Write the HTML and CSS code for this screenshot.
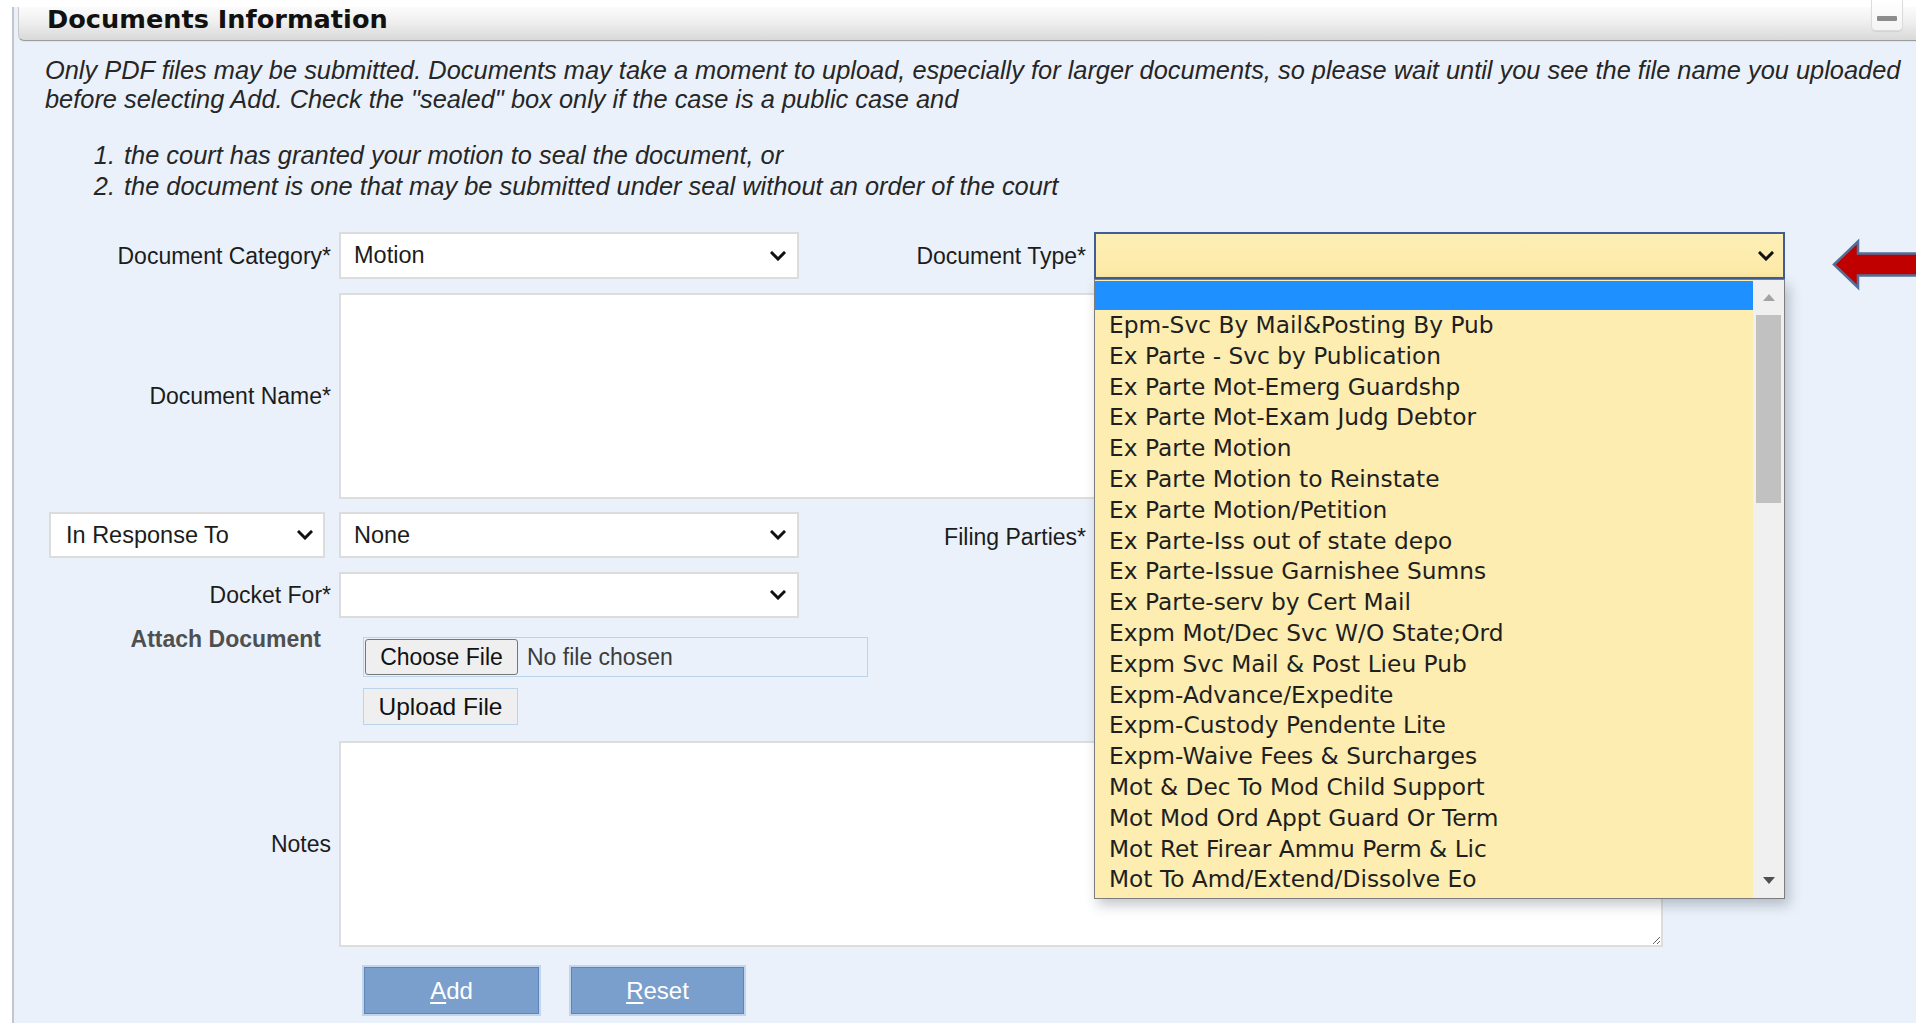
FILE: index.html
```html
<!DOCTYPE html>
<html lang="en">
<head>
<meta charset="utf-8">
<title>Documents Information</title>
<link rel="stylesheet" href="styles.css">
</head>
<body>
<section class="panel">
  <header class="panel-head">
    <h2 class="panel-title">Documents Information</h2>
    <button class="panel-min" type="button" aria-label="Collapse"><span></span></button>
  </header>

  <div class="panel-body">
    <p class="intro">Only PDF files may be submitted. Documents may take a moment to upload, especially for larger documents, so please wait until you see the file name you uploaded before selecting Add. Check the "sealed" box only if the case is a public case and</p>
    <ol class="seal-rules">
      <li>the court has granted your motion to seal the document, or</li>
      <li>the document is one that may be submitted under seal without an order of the court</li>
    </ol>

    <form class="doc-form">
      <!-- category / type -->
      <div class="row row-select">
        <label class="lbl">Document Category*</label>
        <div class="select"><span>Motion</span><svg class="chev" viewBox="0 0 16 10" width="16" height="10"><path d="M2 2l6 6 6-6"/></svg></div>
        <label class="lbl">Document Type*</label>
        <div class="type-field">
          <div class="select select-type"><span></span><svg class="chev" viewBox="0 0 16 10" width="16" height="10"><path d="M2 2l6 6 6-6"/></svg></div>

          <div class="type-list">
            <ul class="type-options">
              <li class="is-active">&nbsp;</li>
              <li>Epm-Svc By Mail&amp;Posting By Pub</li>
              <li>Ex Parte - Svc by Publication</li>
              <li>Ex Parte Mot-Emerg Guardshp</li>
              <li>Ex Parte Mot-Exam Judg Debtor</li>
              <li>Ex Parte Motion</li>
              <li>Ex Parte Motion to Reinstate</li>
              <li>Ex Parte Motion/Petition</li>
              <li>Ex Parte-Iss out of state depo</li>
              <li>Ex Parte-Issue Garnishee Sumns</li>
              <li>Ex Parte-serv by Cert Mail</li>
              <li>Expm Mot/Dec Svc W/O State;Ord</li>
              <li>Expm Svc Mail &amp; Post Lieu Pub</li>
              <li>Expm-Advance/Expedite</li>
              <li>Expm-Custody Pendente Lite</li>
              <li>Expm-Waive Fees &amp; Surcharges</li>
              <li>Mot &amp; Dec To Mod Child Support</li>
              <li>Mot Mod Ord Appt Guard Or Term</li>
              <li>Mot Ret Firear Ammu Perm &amp; Lic</li>
              <li>Mot To Amd/Extend/Dissolve Eo</li>
            </ul>
            <div class="list-scroll">
              <svg class="scroll-up" viewBox="0 0 12 8" width="12" height="8"><path d="M0 8L6 1l6 7z"/></svg>
              <div class="scroll-thumb"></div>
              <svg class="scroll-down" viewBox="0 0 12 8" width="12" height="8"><path d="M0 0h12L6 7z"/></svg>
            </div>
          </div>

          <svg class="pointer" viewBox="0 0 86 50" width="86" height="50"><path d="M2 24.5L26 1.5V13.5H86V35.5H26V47.5Z"/></svg>
        </div>
      </div>

      <!-- document name -->
      <div class="row row-text row-name">
        <label class="lbl">Document Name*</label>
        <textarea class="area"></textarea>
      </div>

      <!-- response / filing parties -->
      <div class="row row-select row-response">
        <div class="select select-response"><span>In Response To</span><svg class="chev" viewBox="0 0 16 10" width="16" height="10"><path d="M2 2l6 6 6-6"/></svg></div>
        <div class="select"><span>None</span><svg class="chev" viewBox="0 0 16 10" width="16" height="10"><path d="M2 2l6 6 6-6"/></svg></div>
        <label class="lbl lbl-parties">Filing Parties*</label>
        <div class="parties"></div>
      </div>

      <!-- docket for -->
      <div class="row row-select row-docket">
        <label class="lbl">Docket For*</label>
        <div class="select"><span></span><svg class="chev" viewBox="0 0 16 10" width="16" height="10"><path d="M2 2l6 6 6-6"/></svg></div>
      </div>

      <!-- attachment -->
      <div class="row row-attach">
        <label class="lbl lbl-attach">Attach Document</label>
        <div class="attach">
          <div class="file">
            <span class="file-btn">Choose File</span>
            <span class="file-name">No file chosen</span>
          </div>
          <button class="upload" type="button">Upload File</button>
        </div>
      </div>

      <!-- notes -->
      <div class="row row-text row-notes">
        <label class="lbl">Notes</label>
        <textarea class="area"></textarea>
      </div>

      <div class="row row-actions">
        <span></span>
        <div class="actions">
          <button class="btn" type="button"><u>A</u>dd</button>
          <button class="btn btn-reset" type="button"><u>R</u>eset</button>
        </div>
      </div>
    </form>
  </div>
</section>
</body>
</html>
```

FILE: styles.css
```css
html, body {
  margin: 0;
  height: 100%;
  overflow: hidden;
}

body {
  background: #ffffff;
  font-family: "Liberation Sans", Arial, sans-serif;
  color: #1c1c1c;
  padding-top: 7px;
  box-sizing: border-box;
}

/* ---------- panel shell ---------- */
.panel {
  margin-left: 12px;
  border-left: 2px solid #c3c7cd;
  background: #eaf1fa;
  min-height: 1016px;
}

.panel-head {
  position: relative;
  margin-left: 4px;
  height: 33px;
  border-left: 1px solid #c9c9c9;
  border-bottom: 1px solid #9c9c9c;
  border-bottom-left-radius: 6px;
  background: linear-gradient(#fbfbfb, #f1f1f1 40%, #d9d9d9);
  box-shadow: 0 1px 0 #dfe4ea;
}

.panel-title {
  margin: 0;
  padding-left: 28px;
  font-family: "DejaVu Sans", Verdana, sans-serif;
  font-weight: bold;
  font-size: 25.6px;
  line-height: 25px;
  color: #111;
}

.panel-min {
  position: absolute;
  top: -7px;
  right: 13px;
  width: 32px;
  height: 31px;
  padding: 0;
  border: 1px solid #dcdcdc;
  border-top: none;
  border-radius: 0 0 5px 5px;
  background: linear-gradient(#ffffff, #f4f4f4);
  box-shadow: 0 1px 1px rgba(0, 0, 0, .08);
}

.panel-min span {
  display: block;
  width: 20px;
  height: 5px;
  margin: 6px auto 0;
  background: #8c8c8c;
  border-radius: 1px;
}

/* ---------- intro text ---------- */
.intro {
  margin: 15px 4px 0 31px;
  font-style: italic;
  font-size: 25.4px;
  line-height: 29px;
  color: #262626;
}

.seal-rules {
  margin: 26px 0 0;
  padding-left: 108px;
  font-style: italic;
  font-size: 25.4px;
  line-height: 31px;
  color: #262626;
}

.seal-rules li { padding-left: 2px; }

/* ---------- form grid ---------- */
.doc-form {
  margin-top: 30px;
  display: flex;
  flex-direction: column;
}

.row {
  display: grid;
  grid-template-columns: 317px 460px 279px 691px;
  column-gap: 8px;
  align-items: center;
}

.row.row-name { margin-top: 14px; }
.row.row-response { margin-top: 13px; }
.row.row-docket { margin-top: 14px; }
.row.row-attach { margin-top: 8px; align-items: start; }
.row.row-notes { margin-top: 16px; }
.row.row-actions { margin-top: 20px; }

.lbl {
  justify-self: end;
  font-size: 23px;
  line-height: 26px;
  color: #1c1c1c;
  white-space: nowrap;
}

.lbl-parties { position: relative; top: 2px; }

.lbl-attach {
  padding-right: 10px;
  font-weight: bold;
  font-size: 23px;
  color: #4f4f4f;
}

/* select look-alike */
.select {
  box-sizing: border-box;
  height: 47px;
  display: flex;
  align-items: center;
  justify-content: space-between;
  padding: 0 11px 0 13px;
  background: #fff;
  border: 2px solid #dcdcdc;
  font-size: 23.5px;
  color: #1c1c1c;
}

.row-response .select,
.row-docket .select { height: 46px; }

.chev path {
  fill: none;
  stroke: #111;
  stroke-width: 3;
  stroke-linecap: square;
}

.select-response {
  width: 276px;
  justify-self: end;
  margin-right: 6px;
  padding-left: 15px;
  padding-right: 10px;
}

.type-field {
  position: relative;
}

.select-type {
  background: linear-gradient(#fdefb6, #fce9a6);
  border: 2px solid #405d97;
  padding-right: 9px;
}

/* open option list of Document Type */
.type-list {
  position: absolute;
  z-index: 5;
  top: 47px;
  left: 0;
  width: 691px;
  height: 620px;
  box-sizing: border-box;
  display: flex;
  border: 1px solid #7d7d7d;
  background: #fdedb0;
  box-shadow: 4px 6px 12px rgba(40, 50, 70, .28);
}

.type-options {
  list-style: none;
  margin: 0;
  padding: 0;
  width: 658px;
  font-family: "DejaVu Sans", Verdana, sans-serif;
  font-size: 23.3px;
  color: #1f1f1f;
}

.type-options li {
  height: 30.8px;
  line-height: 30.8px;
  padding-left: 14px;
  white-space: nowrap;
}

.type-options li.is-active {
  background: #1e90ff;
  height: 29px;
  margin-top: 1px;
}

.list-scroll {
  position: relative;
  flex: 1;
  background: #f0f0f0;
}

.scroll-up,
.scroll-down {
  position: absolute;
  left: 50%;
  margin-left: -6px;
}

.scroll-up { top: 13px; }
.scroll-up path { fill: #a3a3a3; }
.scroll-down { top: 597px; }
.scroll-down path { fill: #505050; }

.scroll-thumb {
  position: absolute;
  top: 35px;
  left: 3px;
  right: 3px;
  height: 188px;
  background: #c1c1c1;
}

.pointer {
  position: absolute;
  top: 8px;
  left: 738px;
  overflow: visible;
}

.pointer path {
  fill: #c00000;
  stroke: #4f709a;
  stroke-width: 2.5;
  stroke-linejoin: miter;
}

/* text areas */
.area {
  grid-column: 2 / span 3;
  box-sizing: border-box;
  width: 1324px;
  height: 206px;
  margin: 0;
  border: 2px solid #dddddd;
  background: #fff;
  font-family: "Liberation Sans", Arial, sans-serif;
  font-size: 23px;
}

/* file attachment */
.attach {
  grid-column: 2 / span 2;
  display: flex;
  flex-direction: column;
  align-items: flex-start;
  padding-left: 24px;
}

.file {
  margin-top: 11px;
  box-sizing: border-box;
  width: 505px;
  height: 40px;
  display: flex;
  align-items: center;
  border: 1px solid #bcd3ee;
  padding-left: 1px;
}

.file-btn {
  box-sizing: border-box;
  height: 36px;
  width: 153px;
  display: flex;
  align-items: center;
  justify-content: center;
  background: #efefef;
  border: 1px solid #767676;
  border-radius: 3px;
  font-size: 23px;
  color: #111;
}

.file-name {
  margin-left: 9px;
  font-size: 23px;
  color: #3c3c3c;
}

.upload {
  margin-top: 11px;
  box-sizing: border-box;
  width: 155px;
  height: 37px;
  padding: 0;
  background: #efefef;
  border: 1px solid #bcd3ee;
  font-family: "Liberation Sans", Arial, sans-serif;
  font-size: 24.5px;
  color: #111;
}

/* action buttons */
.actions {
  grid-column: 2 / span 2;
  display: flex;
  gap: 32px;
  padding-left: 25px;
}

.btn {
  box-sizing: border-box;
  width: 175px;
  height: 47px;
  padding: 0;
  background: #7a9fcc;
  border: 1px solid #5f84b6;
  box-shadow: 0 0 0 2px #c3d5ec;
  font-family: "Liberation Sans", Arial, sans-serif;
  font-size: 24px;
  color: #fff;
}

.btn-reset { width: 173px; }

.btn u {
  text-decoration-thickness: 2px;
  text-underline-offset: 3px;
}
```
